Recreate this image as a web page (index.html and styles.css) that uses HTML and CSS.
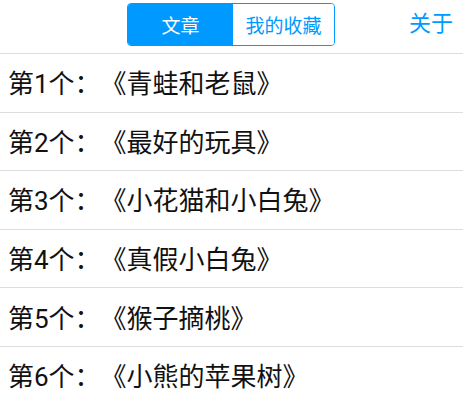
FILE: index.html
```html
<!DOCTYPE html>
<html lang="zh-CN">
<head>
<meta charset="utf-8">
<link rel="stylesheet" href="styles.css">
</head>
<body>
<header class="topbar">
  <div class="segmented">
    <span class="seg seg-active">文章</span>
    <span class="seg seg-right">我的收藏</span>
  </div>
  <span class="about">关于</span>
</header>
<ul class="list">
  <li class="row">第1个：《青蛙和老鼠》</li>
  <li class="row">第2个：《最好的玩具》</li>
  <li class="row">第3个：《小花猫和小白兔》</li>
  <li class="row">第4个：《真假小白兔》</li>
  <li class="row">第5个：《猴子摘桃》</li>
  <li class="row">第6个：《小熊的苹果树》</li>
</ul>
</body>
</html>
```

FILE: styles.css
```css
html, body {
  margin: 0;
  padding: 0;
  background: #fff;
  font-family: Roboto, "Noto Sans CJK SC", sans-serif;
  text-spacing-trim: space-all;
  overflow: hidden;
}
.topbar {
  position: relative;
  height: 53px;
  border-bottom: 1px solid #dddddd;
  box-sizing: content-box;
}
.segmented {
  position: absolute;
  left: 127px;
  top: 3px;
  display: flex;
  height: 43px;
  border: 1.5px solid #0099ff;
  border-radius: 4px;
  overflow: hidden;
  box-sizing: border-box;
}
.seg {
  display: flex;
  align-items: center;
  justify-content: center;
  font-size: 19px;
  color: #0099ff;
  background: #fff;
}
.seg-active {
  width: 105px;
  background: #0099ff;
  color: #fff;
}
.seg-right {
  width: 101px;
}
.about {
  position: absolute;
  right: 10px;
  top: 7px;
  font-size: 22px;
  line-height: 34px;
  color: #0099ff;
}
.list {
  list-style: none;
  margin: 0;
  padding: 0;
}
.row {
  height: 55.6px;
  padding-bottom: 2px;
  display: flex;
  align-items: center;
  padding-left: 8px;
  font-size: 26px;
  color: #111;
  border-bottom: 1px solid #dddddd;
  box-sizing: content-box;
}
```
